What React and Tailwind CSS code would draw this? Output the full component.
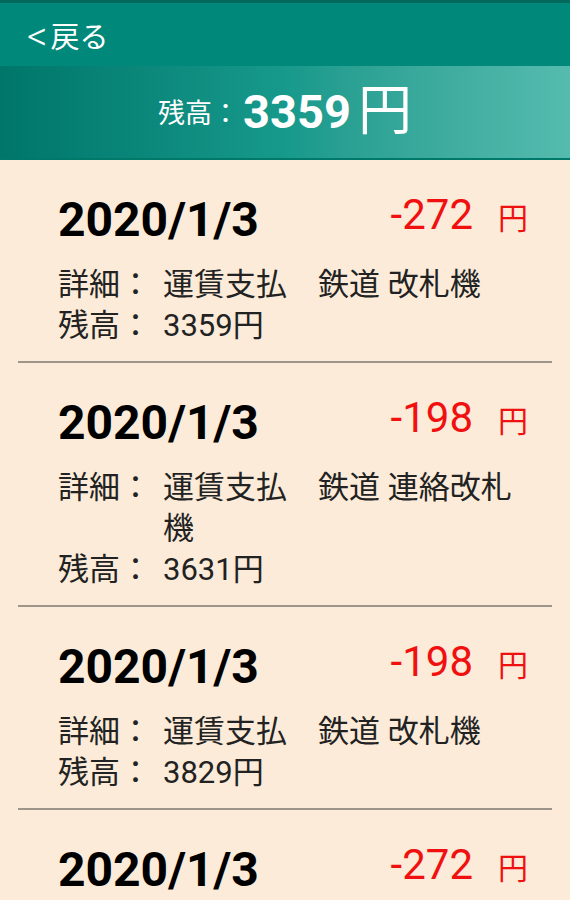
import React from 'react';

const entries = [
  { date: '2020/1/3', amount: '-272', detail: '運賃支払　鉄道 改札機', balance: '3359円' },
  { date: '2020/1/3', amount: '-198', detail: '運賃支払　鉄道 連絡改札機', balance: '3631円' },
  { date: '2020/1/3', amount: '-198', detail: '運賃支払　鉄道 改札機', balance: '3829円' },
  { date: '2020/1/3', amount: '-272', detail: '運賃支払　鉄道 改札機', balance: '3359円' },
];

const font = { fontFamily: "Roboto, 'Noto Sans CJK JP', sans-serif" };

const Entry = ({ item }) => (
  <div className="mx-[18px] border-b-2 border-[#9d958a]">
    <div className="pl-[40px] pr-[24px] pt-[32px] pb-[15px]">
      <div className="flex items-start justify-between">
        <span className="text-[48px] leading-[56px] font-bold text-black">{item.date}</span>
        <span className="flex items-baseline text-[#f01010] mt-[-2px]">
          <span className="text-[42px] leading-[50px]">{item.amount}</span>
          <span className="text-[30px] ml-[25px]">円</span>
        </span>
      </div>
      <div className="mt-[16px] text-[31px] leading-[41px] text-[#222]">
        <div className="flex">
          <span className="w-[105px] shrink-0">詳細：</span>
          <span className="w-[370px]">{item.detail}</span>
        </div>
        <div className="flex">
          <span className="w-[105px] shrink-0">残高：</span>
          <span>{item.balance}</span>
        </div>
      </div>
    </div>
  </div>
);

export default function App() {
  return (
    <div className="w-[570px] h-[900px] overflow-hidden bg-[#fbebd8]" style={font}>
      <div className="h-[66px] bg-[#00897b] border-t-[3px] border-[#00695c] flex items-center pl-[27px] pt-[8px] shadow-[0_2px_3px_rgba(0,60,50,0.5)]">
        <span className="text-white text-[40px] font-light leading-none mr-[3px] mt-[-4px]">&lt;</span>
        <span className="text-white text-[29px] leading-none">戻る</span>
      </div>
      <div className="h-[94px] bg-gradient-to-r from-[#00766a] via-[#16998b] to-[#55bbaf] border-b-2 border-[#00796b] flex items-center justify-center text-white">
        <span className="text-[27px] mt-[4px]">残高：</span>
        <span className="text-[47px] font-bold ml-[4px]">3359</span>
        <span className="text-[54px] leading-none ml-[7px]">円</span>
      </div>
      {entries.map((item, i) => (
        <Entry key={i} item={item} />
      ))}
    </div>
  );
}
